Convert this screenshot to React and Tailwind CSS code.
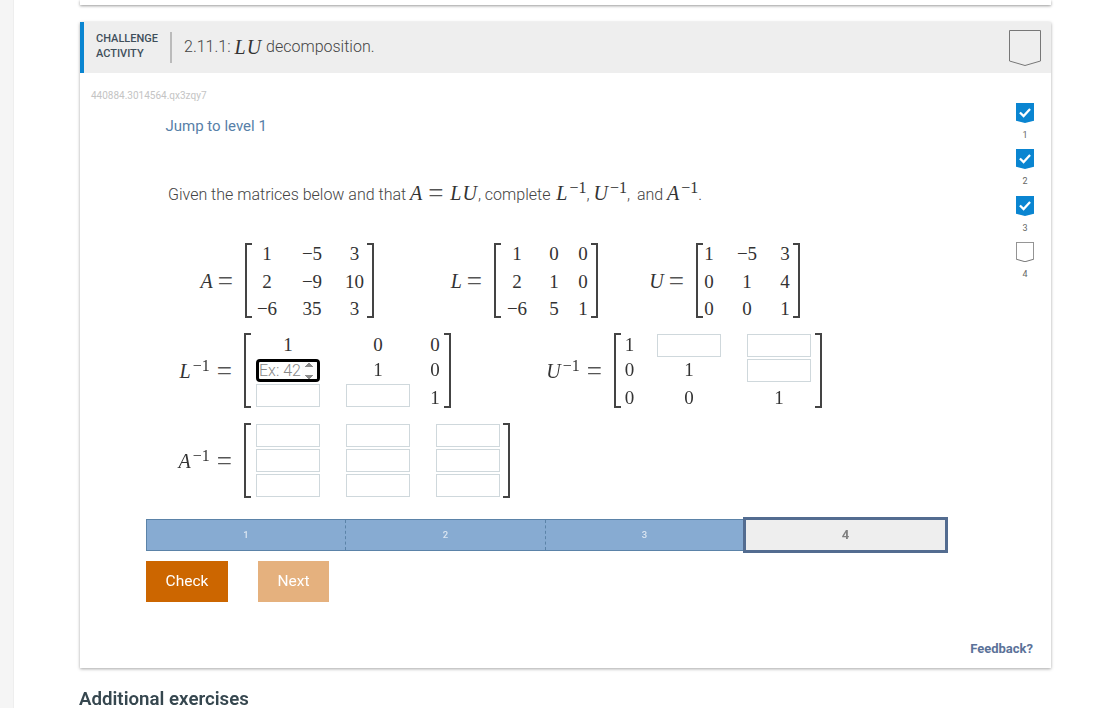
import React from "react";

const serif = "font-['Liberation_Serif',serif]";

// a letter with an optional -1, the way the math renders it
const Sym = ({ name, inv }) => (
  <span className={`${serif} text-[20px] leading-[20px] text-[#333] tracking-[1px]`}>
    <i>{name}</i>
    {inv ? <sup className="text-[16px] -top-[7px] tracking-[0px] ml-[1px]">−1</sup> : null}
  </span>
);

const Eq = ({ className }) => (
  <span className={`${serif} text-[27px] leading-[20px] text-[#555] align-[-2px] ${className || ""}`}>=</span>
);

const Label = ({ name, inv, className }) => (
  <div className={`${className} shrink-0 text-right whitespace-nowrap pr-[12px] self-center h-[20px] leading-[20px]`}>
    <Sym name={name} inv={inv} />
    <Eq className={inv ? "ml-[7px]" : "ml-[4px]"} />
  </div>
);

const Blank = () => (
  <input aria-label="answer" className="w-[64px] h-[23px] border border-[#cfd8dc] bg-white" />
);

const Focused = () => (
  <input
    type="number"
    autoFocus
    placeholder="Ex: 42"
    className="w-[64px] h-[23px] rounded-[4px] border-[3px] border-black outline-none caret-transparent bg-white text-[16px] font-light text-[#555] placeholder:text-[#888] px-0"
  />
);

const Cell = ({ v, low }) => {
  if (v === "blank") return <Blank />;
  if (v === "focus") return <Focused />;
  if (v === "") return <span />;
  return (
    <span className={`${serif} text-[19px] text-[#333] text-center ${low ? "pt-[5px]" : ""}`}>{v}</span>
  );
};

const Matrix = ({ rows, grid, low, right }) => (
  <div className="flex h-[75px] shrink-0">
    <div className="w-[7px] h-[75px] border-l-2 border-t-2 border-b-2 border-[#444] shrink-0" />
    <div className={`grid h-[75px] content-center justify-items-center ${grid}`}>
      {rows.flat().map((v, i) => (
        <Cell key={i} v={v} low={low && i >= rows.flat().length - rows[0].length} />
      ))}
    </div>
    <div className={`w-[7px] h-[75px] border-r-2 border-t-2 border-b-2 border-[#444] shrink-0 ${right || ""}`} />
  </div>
);

const Bookmark = ({ checked, w, h }) => (
  <svg width={w} height={h} viewBox="0 0 32 36" preserveAspectRatio="none" className="shrink-0">
    {checked ? (
      <>
        <path d="M0 0H32V32L16 36 0 32Z" fill="#0a85d1" />
        <path d="M7 17l6.5 6.5L25 11" fill="none" stroke="#fff" strokeWidth="4" />
      </>
    ) : (
      <path d="M.5.5H31.5V31L16 35.5.5 31Z" fill="none" stroke="#777" strokeWidth="1" vectorEffect="non-scaling-stroke" />
    )}
  </svg>
);

const levels = [
  { n: 1, done: true },
  { n: 2, done: true },
  { n: 3, done: true },
  { n: 4, done: false },
];

export default function App() {
  return (
    <div className="h-[708px] overflow-hidden bg-white flex font-['Roboto',sans-serif]">
      <div className="w-[14px] h-[708px] bg-[#f5f5f5] border-r border-[#eeeeee] shrink-0" />
      <div className="ml-[66px] w-[971px] shrink-0">
        <div className="h-[5px] bg-white shadow-[0_1px_3px_rgba(0,0,0,0.4)]" />

        <div className="mt-[17px] h-[646px] bg-white shadow-[0_1px_3px_rgba(0,0,0,0.35)] flex flex-col">
          {/* Header */}
          <div className="h-[51px] bg-[#eeeeee] flex items-center border-l-4 border-[#0a85d1] shrink-0">
            <div className="ml-[12px] w-[74px] pb-[4px] text-[11px] leading-[15px] font-medium text-[#3f4f5b]">
              <div>CHALLENGE</div>
              <div>ACTIVITY</div>
            </div>
            <div className="w-[2px] h-[31px] bg-[#bbbbbb]" />
            <div className="ml-[12px] pb-[2px] h-[22px] text-[16px] leading-[20px] font-light text-[#444] flex items-center gap-[4px]">
              <span>2.11.1:</span>
              <Sym name="LU" />
              <span>decomposition.</span>
            </div>
            <div className="ml-auto mr-[10px]">
              <Bookmark w={32} h={36} />
            </div>
          </div>

          <div className="flex flex-1">
            {/* Main */}
            <div className="w-[919px] shrink-0">
              <div className="pt-[17px] pl-[11px] text-[10px] leading-[12px] text-[#c4c4c4]">440884.3014564.qx3zqy7</div>
              <div className="mt-[14px] ml-[85.5px] text-[15px] leading-[20px] text-[#5780a8]">Jump to level 1</div>
              <div className="mt-[47px] ml-[88px] h-[20px] text-[16px] leading-[20px] font-light text-[#444] whitespace-nowrap">
                Given the matrices below and that <Sym name="A" /> <Eq className="ml-[1px] mr-[3px]" /> <Sym name="LU" />, complete<span className="ml-[2px]"> </span><Sym name="L" inv />, <Sym name="U" inv />,<span className="ml-[3px]"> and</span> <Sym name="A" inv />.
              </div>

              <div className="mt-[40px] flex ml-[80px]">
                <Label name="A" className="w-[85px]" />
                <Matrix grid="grid-cols-[30px_60px_25px] grid-rows-[27.5px_27.5px_27.5px] items-center pt-[3px]" rows={[["1", "−5", "3"], ["2", "−9", "10"], ["−6", "35", "3"]]} />
                <Label name="L" className="w-[120px]" />
                <Matrix grid="grid-cols-[32px_42px_16px] grid-rows-[27.5px_27.5px_27.5px] items-center pt-[3px]" rows={[["1", "0", "0"], ["2", "1", "0"], ["−6", "5", "1"]]} />
                <Label name="U" className="w-[98px]" />
                <Matrix grid="grid-cols-[12px_64px_12px] grid-rows-[27.5px_27.5px_27.5px] items-center pt-[3px]" right="ml-[2px]" rows={[["1", "−5", "3"], ["0", "1", "4"], ["0", "0", "1"]]} />
              </div>

              <div className="mt-[15px] flex ml-[80px]">
                <Label name="L" inv className="w-[84px]" />
                <Matrix low grid="grid-cols-[5px_64px_26px_64px_17px_16px_1px] grid-rows-[23px_23px_23px] gap-y-[2px] items-center" rows={[["", "1", "", "0", "", "0", ""], ["", "focus", "", "1", "", "0", ""], ["", "blank", "", "blank", "", "1", ""]]} />
                <Label name="U" inv className="w-[163px]" />
                <Matrix low grid="grid-cols-[17px_19px_64px_26px_64px_4px] grid-rows-[23px_23px_23px] gap-y-[2px] items-center" rows={[["1", "", "blank", "", "blank", ""], ["0", "", "1", "", "blank", ""], ["0", "", "0", "", "1", ""]]} />
              </div>

              <div className="mt-[15px] flex ml-[80px]">
                <Label name="A" inv className="w-[84px]" />
                <Matrix grid="grid-cols-[5px_64px_26px_64px_26px_64px_3px] grid-rows-[23px_23px_23px] gap-y-[2px] items-center" rows={[["", "blank", "", "blank", "", "blank", ""], ["", "blank", "", "blank", "", "blank", ""], ["", "blank", "", "blank", "", "blank", ""]]} />
              </div>

              {/* Level bar */}
              <div className="mt-[19px] ml-[66px] w-[802px] h-[36px] flex items-center">
                <div className="w-[598px] h-[32px] flex border border-[#5b83a8] bg-[#87abd2] text-[9.5px] font-medium text-white/70">
                  <div className="w-[199px] flex items-center justify-center border-r border-dashed border-[#5b83a8]">1</div>
                  <div className="w-[200px] flex items-center justify-center border-r border-dashed border-[#5b83a8]">2</div>
                  <div className="flex-1 flex items-center justify-center">3</div>
                </div>
                <div className="-ml-[1px] w-[205px] h-[36px] flex items-center justify-center border-[3px] border-[#536c90] bg-[#eeeeee] text-[13px] font-bold text-[#808080]">4</div>
              </div>

              <div className="mt-[8px] ml-[66px] flex gap-[30px]">
                <button className="w-[82px] h-[41px] bg-[#cc6600] text-white text-[15.5px]">Check</button>
                <button className="w-[71px] h-[41px] bg-[#e5b17e] text-white text-[15.5px]">Next</button>
              </div>
            </div>

            {/* Levels + feedback */}
            <div className="flex-1 flex flex-col items-center pt-[30px] relative">
              {levels.map((l) => (
                <div key={l.n} className="h-[46.33px] flex flex-col items-center">
                  <Bookmark checked={l.done} w={18} h={20} />
                  <div className="mt-[7px] text-[9px] leading-[10px] text-[#666]">{l.n}</div>
                </div>
              ))}
              <a className="absolute right-[18px] bottom-[11px] text-[13px] leading-[16px] font-bold text-[#5b7299] whitespace-nowrap">Feedback?</a>
            </div>
          </div>
        </div>

        <h2 className="mt-[21px] -ml-[1px] text-[18.7px] leading-[20px] font-semibold text-[#36474f] whitespace-nowrap">Additional exercises</h2>
      </div>
    </div>
  );
}
